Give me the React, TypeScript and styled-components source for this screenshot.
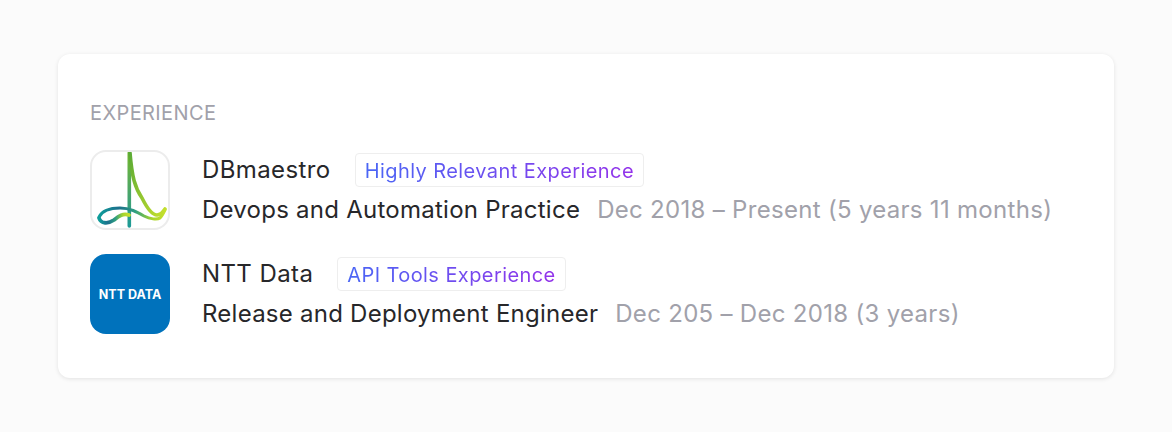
import React from "react";
import styled, { createGlobalStyle } from "styled-components";

const GlobalStyle = createGlobalStyle`
  html, body {
    margin: 0;
    padding: 0;
    background: #fbfbfb;
    font-family: Inter, "Noto Sans", sans-serif;
  }
`;

const Page = styled.div`
  width: 1172px;
  height: 432px;
  box-sizing: border-box;
  padding: 54px 58px;
`;

const Card = styled.section`
  width: 1056px;
  height: 324px;
  box-sizing: border-box;
  padding: 46px 32px 44px;
  background: #fff;
  border-radius: 12px;
  box-shadow: 0 1px 4px rgba(0, 0, 0, 0.1);
`;

const Heading = styled.h2`
  margin: 0 0 24px;
  font-size: 20px;
  line-height: 26px;
  font-weight: 400;
  letter-spacing: 0.4px;
  color: #a1a1aa;
`;

const List = styled.div`
  display: flex;
  flex-direction: column;
  gap: 24px;
`;

const Row = styled.div`
  display: flex;
  align-items: flex-start;
  gap: 32px;
`;

const LogoBox = styled.div<{ $bg: string; $border?: boolean }>`
  width: 80px;
  height: 80px;
  flex: none;
  box-sizing: border-box;
  display: flex;
  align-items: center;
  justify-content: center;
  border-radius: 16px;
  background: ${(p) => p.$bg};
  border: ${(p) => (p.$border ? "2px solid #ececec" : "none")};
`;

const NttMark = styled.span`
  font-size: 12.5px;
  font-weight: 700;
  color: #fff;
  white-space: nowrap;
`;

const Info = styled.div`
  display: flex;
  flex-direction: column;
  gap: 8px;
  padding-top: 3px;
`;

const TopLine = styled.div`
  display: flex;
  align-items: center;
  gap: 24px;
  height: 34px;
`;

const Company = styled.span`
  font-size: 24px;
  line-height: 30px;
  font-weight: 400;
  letter-spacing: 0.4px;
  color: #27272a;
`;

const Tag = styled.span`
  display: inline-block;
  padding: 0 9px;
  height: 34px;
  box-sizing: border-box;
  line-height: 34px;
  border: 1px solid #eeeeee;
  border-radius: 4px;
  font-size: 20px;
  letter-spacing: 0.42px;
`;

const GradientText = styled.span`
  background: linear-gradient(90deg, #4a66f5, #9333ea);
  -webkit-background-clip: text;
  background-clip: text;
  color: transparent;
`;

const BottomLine = styled.div`
  display: flex;
  gap: 17px;
  font-size: 24px;
  line-height: 30px;
`;

const Role = styled.span`
  color: #27272a;
  letter-spacing: 0.25px;
`;

const Period = styled.span`
  color: #a1a1aa;
  letter-spacing: 0.3px;
`;

const DbLogo = () => (
  <svg width="76" height="76" viewBox="2 2 76 76" fill="none">
    <defs>
      <linearGradient id="dbStem" gradientUnits="userSpaceOnUse" x1="39" y1="2" x2="39" y2="76">
        <stop offset="0" stopColor="#74b82e" />
        <stop offset="0.55" stopColor="#4aa56a" />
        <stop offset="1" stopColor="#1d9a96" />
      </linearGradient>
      <linearGradient id="dbCurve" x1="0" y1="0" x2="1" y2="0">
        <stop offset="0" stopColor="#0f9d9a" />
        <stop offset="0.3" stopColor="#1c6f8c" />
        <stop offset="0.55" stopColor="#2f9f80" />
        <stop offset="0.8" stopColor="#a6d42c" />
        <stop offset="1" stopColor="#c6e02c" />
      </linearGradient>
      <linearGradient id="dbPeak" x1="0" y1="0" x2="1" y2="1">
        <stop offset="0" stopColor="#5aaa35" />
        <stop offset="1" stopColor="#c6e02c" />
      </linearGradient>
    </defs>
    <path d="M39.3 3V76" stroke="url(#dbStem)" strokeWidth="3.6" strokeLinecap="round" />
    <path
      d="M40 3C42 27 45 38 52 48C57 58 62 65 67 65C70 65 73 62 75 59"
      stroke="url(#dbPeak)"
      strokeWidth="3.6"
      strokeLinecap="round"
    />
    <path
      d="M9 67C12 61 20 58 30 58C40 58 47 62 54 66C60 69 67 70 70 68C72 66 74 62 75 60"
      stroke="url(#dbCurve)"
      strokeWidth="3"
      strokeLinecap="round"
    />
    <path
      d="M9 68C11 74 18 74 24 70C29 66 33 63 39 65"
      stroke="url(#dbCurve)"
      strokeWidth="3.8"
      strokeLinecap="round"
    />
  </svg>
);

const jobs = [
  {
    company: "DBmaestro",
    tag: "Highly Relevant Experience",
    role: "Devops and Automation Practice",
    period: "Dec 2018 – Present (5 years 11 months)",
    logo: (
      <LogoBox $bg="#fff" $border>
        <DbLogo />
      </LogoBox>
    ),
  },
  {
    company: "NTT Data",
    tag: "API Tools Experience",
    role: "Release and Deployment Engineer",
    period: "Dec 205 – Dec 2018 (3 years)",
    logo: (
      <LogoBox $bg="#0072bc">
        <NttMark>NTT DATA</NttMark>
      </LogoBox>
    ),
  },
];

const App = () => (
  <Page>
    <GlobalStyle />
    <Card>
      <Heading>EXPERIENCE</Heading>
      <List>
        {jobs.map((job) => (
          <Row key={job.company}>
            {job.logo}
            <Info>
              <TopLine>
                <Company>{job.company}</Company>
                <Tag>
                  <GradientText>{job.tag}</GradientText>
                </Tag>
              </TopLine>
              <BottomLine>
                <Role>{job.role}</Role>
                <Period>{job.period}</Period>
              </BottomLine>
            </Info>
          </Row>
        ))}
      </List>
    </Card>
  </Page>
);

export default App;
